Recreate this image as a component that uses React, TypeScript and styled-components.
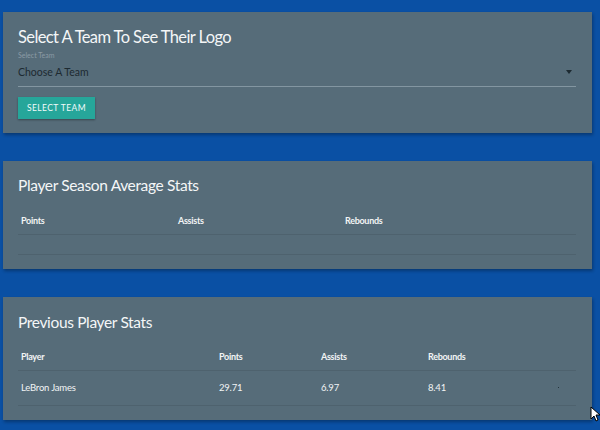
import React from "react";
import styled, { createGlobalStyle } from "styled-components";

const Global = createGlobalStyle`
  html, body { margin: 0; padding: 0; background: #0a50a4; }
  body { font-family: Lato, "Open Sans", sans-serif; width: 600px; height: 430px; overflow: hidden; }
  * { box-sizing: border-box; }
`;

const Page = styled.div`
  position: relative;
  display: flex;
  flex-direction: column;
  gap: 28px;
  padding: 12px 8px 0 3px;
`;

const Card = styled.section<{ $h: number }>`
  background: #566c79;
  height: ${(p) => p.$h}px;
  padding: 0 16px 0 15px;
  box-shadow: 1px 2px 3px rgba(0, 0, 0, 0.3);
  display: flex;
  flex-direction: column;
`;

const Title = styled.h2<{ $size: number; $top: number; $ls: number }>`
  margin: ${(p) => p.$top}px 0 0;
  font-size: ${(p) => p.$size}px;
  font-weight: 400;
  color: #f4f6f7;
  line-height: 1.2;
  letter-spacing: ${(p) => p.$ls}px;
`;

const FieldLabel = styled.div`
  font-size: 7px;
  color: #8b9ba5;
  margin-top: 3px;
  line-height: 9px;
`;

const SelectBox = styled.div`
  display: flex;
  align-items: center;
  justify-content: space-between;
  height: 27px;
  border-bottom: 1px solid #8396a1;
  font-size: 10.5px;
  color: #1d2a31;
  padding-right: 4px;
  padding-bottom: 2px;
`;

const Caret = styled.span`
  width: 0;
  height: 0;
  border-left: 3.5px solid transparent;
  border-right: 3.5px solid transparent;
  border-top: 4px solid #1d2a31;
`;

const Button = styled.button`
  margin-top: 10px;
  align-self: flex-start;
  height: 22px;
  width: 77px;
  border: none;
  background: #26a69a;
  color: #f1fbfa;
  font-family: inherit;
  font-size: 8.5px;
  letter-spacing: 0.4px;
  padding: 0;
  box-shadow: 0 1px 2px rgba(0, 0, 0, 0.35);
`;

const Table = styled.div<{ $cols: string; $top: number }>`
  display: grid;
  grid-template-columns: ${(p) => p.$cols};
  margin-top: ${(p) => p.$top}px;
`;

const Row = styled.div`
  display: contents;
`;

const Cell = styled.div<{ $head?: boolean; $h: number }>`
  height: ${(p) => p.$h}px;
  display: flex;
  align-items: center;
  padding-left: 3px;
  font-size: ${(p) => (p.$head ? 9 : 9.5)}px;
  font-weight: ${(p) => (p.$head ? 700 : 400)};
  letter-spacing: ${(p) => (p.$head ? "-0.3px" : "-0.2px")};
  color: #f2f4f5;
  border-bottom: 1px solid #4e626e;
`;

const Dot = styled.span`
  width: 1px;
  height: 1px;
  background: #24343c;
  margin-left: 112px;
`;

const Cursor = styled.svg`
  position: absolute;
  left: 590px;
  top: 406px;
`;

export default function App() {
  return (
    <>
      <Global />
      <Page>
        <Card $h={121}>
          <Title $size={16.5} $top={16} $ls={-0.6}>Select A Team To See Their Logo</Title>
          <FieldLabel>Select Team</FieldLabel>
          <SelectBox>
            <span>Choose A Team</span>
            <Caret />
          </SelectBox>
          <Button>SELECT TEAM</Button>
        </Card>
        <Card $h={108}>
          <Title $size={15.5} $top={15} $ls={-0.35}>Player Season Average Stats</Title>
          <Table $cols="157px 167px 1fr" $top={12}>
            <Row>
              <Cell $head $h={28}>Points</Cell>
              <Cell $head $h={28}>Assists</Cell>
              <Cell $head $h={28}>Rebounds</Cell>
            </Row>
            <Row>
              <Cell $h={20} />
              <Cell $h={20} />
              <Cell $h={20} />
            </Row>
          </Table>
        </Card>
        <Card $h={123}>
          <Title $size={15.5} $top={16} $ls={-0.35}>Previous Player Stats</Title>
          <Table $cols="198px 102px 107px 1fr" $top={11}>
            <Row>
              <Cell $head $h={28}>Player</Cell>
              <Cell $head $h={28}>Points</Cell>
              <Cell $head $h={28}>Assists</Cell>
              <Cell $head $h={28}>Rebounds</Cell>
            </Row>
            <Row>
              <Cell $h={35}>LeBron James</Cell>
              <Cell $h={35}>29.71</Cell>
              <Cell $h={35}>6.97</Cell>
              <Cell $h={35}>
                8.41
                <Dot />
              </Cell>
            </Row>
          </Table>
        </Card>
      </Page>
      <Cursor width="10" height="16" viewBox="0 0 10 16">
        <path d="M1 1 L1 13 L4 10 L6 15 L8 14 L6 9 L10 9 Z" fill="#fff" stroke="#000" strokeWidth="1" />
      </Cursor>
    </>
  );
}
